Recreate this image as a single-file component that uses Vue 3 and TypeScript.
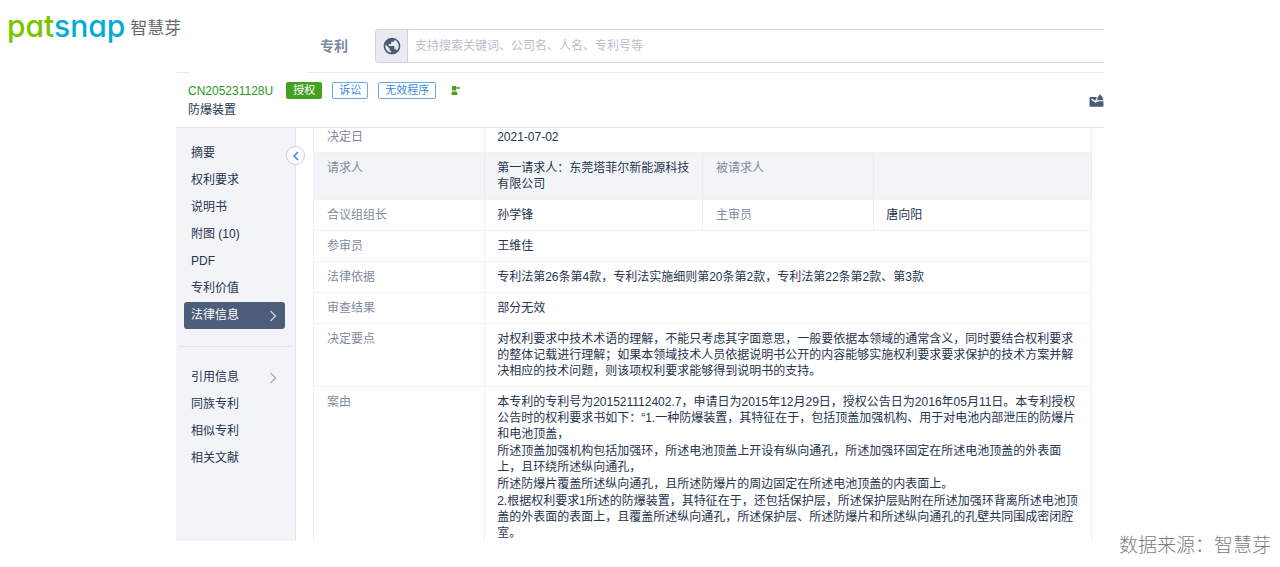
<script setup lang="ts">
import { ref } from 'vue'

interface NavItem {
  label: string
  expandable?: boolean
}

interface Cell {
  label: string
  paragraphs: string[]
}

const query = ref('')
const active = ref('法律信息')

const navGroups: NavItem[][] = [
  [
    { label: '摘要' },
    { label: '权利要求' },
    { label: '说明书' },
    { label: '附图 (10)' },
    { label: 'PDF' },
    { label: '专利价值' },
    { label: '法律信息', expandable: true },
  ],
  [
    { label: '引用信息', expandable: true },
    { label: '同族专利' },
    { label: '相似专利' },
    { label: '相关文献' },
  ],
]

const rows: Cell[][] = [
  [{ label: '决定日', paragraphs: ['2021-07-02'] }],
  [
    { label: '请求人', paragraphs: ['第一请求人：东莞塔菲尔新能源科技有限公司'] },
    { label: '被请求人', paragraphs: [] },
  ],
  [
    { label: '合议组组长', paragraphs: ['孙学锋'] },
    { label: '主审员', paragraphs: ['唐向阳'] },
  ],
  [{ label: '参审员', paragraphs: ['王维佳'] }],
  [
    {
      label: '法律依据',
      paragraphs: ['专利法第26条第4款，专利法实施细则第20条第2款，专利法第22条第2款、第3款'],
    },
  ],
  [{ label: '审查结果', paragraphs: ['部分无效'] }],
  [
    {
      label: '决定要点',
      paragraphs: [
        '对权利要求中技术术语的理解，不能只考虑其字面意思，一般要依据本领域的通常含义，同时要结合权利要求的整体记载进行理解；如果本领域技术人员依据说明书公开的内容能够实施权利要求要求保护的技术方案并解决相应的技术问题，则该项权利要求能够得到说明书的支持。',
      ],
    },
  ],
  [
    {
      label: '案由',
      paragraphs: [
        '本专利的专利号为201521112402.7，申请日为2015年12月29日，授权公告日为2016年05月11日。本专利授权公告时的权利要求书如下：“1.一种防爆装置，其特征在于，包括顶盖加强机构、用于对电池内部泄压的防爆片和电池顶盖，',
        '所述顶盖加强机构包括加强环，所述电池顶盖上开设有纵向通孔，所述加强环固定在所述电池顶盖的外表面上，且环绕所述纵向通孔，',
        '所述防爆片覆盖所述纵向通孔，且所述防爆片的周边固定在所述电池顶盖的内表面上。',
        '2.根据权利要求1所述的防爆装置，其特征在于，还包括保护层，所述保护层贴附在所述加强环背离所述电池顶盖的外表面的表面上，且覆盖所述纵向通孔，所述保护层、所述防爆片和所述纵向通孔的孔壁共同围成密闭腔室。',
      ],
    },
  ],
]
</script>

<template>
  <div class="page">
    <div class="brand">
      <span class="wordmark"><span class="pat">pat</span><span class="snap">snap</span></span>
      <span class="brand-cn">智慧芽</span>
    </div>

    <main class="panel">
      <form class="search" @submit.prevent>
        <label class="search-label" for="query">专利</label>
        <div class="search-box">
          <button class="scope" type="button" aria-label="全球">
            <svg viewBox="0 0 24 24" width="20" height="20">
              <path
                fill="currentColor"
                d="M12 2C6.48 2 2 6.48 2 12s4.48 10 10 10 10-4.48 10-10S17.52 2 12 2zm-1 17.93c-3.95-.49-7-3.85-7-7.93 0-.62.08-1.21.21-1.79L9 15v1c0 1.1.9 2 2 2v1.93zm6.9-2.54c-.26-.81-1-1.39-1.9-1.39h-1v-3c0-.55-.45-1-1-1H8v-2h2c.55 0 1-.45 1-1V7h2c1.1 0 2-.9 2-2v-.41c2.93 1.19 5 4.06 5 7.41 0 2.08-.8 3.97-2.1 5.39z"
              />
            </svg>
          </button>
          <input
            id="query"
            v-model="query"
            type="text"
            placeholder="支持搜索关键词、公司名、人名、专利号等"
          />
        </div>
      </form>

      <div class="rule"><span></span><span></span></div>

      <header class="heading">
        <div class="heading-main">
          <div class="ident">
            <a class="number" href="#">CN205231128U</a>
            <span class="tag solid">授权</span>
            <span class="tag">诉讼</span>
            <span class="tag">无效程序</span>
            <svg class="gavel" viewBox="0 0 10 10" width="10" height="10">
              <path fill="currentColor" d="M1 0h4v1.300h4v1.500H5v1.700H1zM1.500 5.500h4l.8 1.500v2H.5V7z" />
            </svg>
          </div>
          <h1>防爆装置</h1>
        </div>
        <button class="mail" type="button" aria-label="订阅提醒">
          <svg viewBox="0 0 15 13" width="15" height="13">
            <rect x="0.500" y="3" width="14" height="9.700" rx="1" fill="currentColor" />
            <path d="M2.500 5 6.500 8 9 6.800" fill="none" stroke="#fff" stroke-width="1.500" />
            <path
              d="M7.500 6.300 8.500 5V3.500L10.300 1.200 11.100 0 11.900 1.200 13.700 3.500V5l1 1.300z"
              fill="currentColor"
              stroke="#fff"
              stroke-width="2"
              paint-order="stroke"
            />
          </svg>
        </button>
      </header>

      <div class="body">
        <aside class="sidebar">
          <nav>
            <ul v-for="(group, g) in navGroups" :key="g">
              <li v-for="item in group" :key="item.label">
                <a
                  href="#"
                  :class="{ active: item.label === active }"
                  @click.prevent="active = item.label"
                >
                  {{ item.label }}
                  <svg v-if="item.expandable" viewBox="0 0 8 12" width="8" height="12">
                    <path
                      d="M1.500 1 6.500 6l-5 5"
                      fill="none"
                      stroke="currentColor"
                      stroke-width="1.300"
                    />
                  </svg>
                </a>
              </li>
            </ul>
          </nav>
          <button class="collapse" type="button" aria-label="收起">
            <svg viewBox="0 0 6 10" width="6" height="10">
              <path d="M5 1 1 5l4 4" fill="none" stroke="currentColor" stroke-width="1.500" />
            </svg>
          </button>
        </aside>

        <div class="content">
          <table>
            <colgroup>
              <col class="col-label" />
              <col class="col-value" />
              <col class="col-label" />
              <col class="col-value" />
            </colgroup>
            <tbody>
              <tr v-for="(row, r) in rows" :key="r" :class="{ shaded: r === 1 }">
                <template v-for="cell in row" :key="cell.label">
                  <th scope="row">{{ cell.label }}</th>
                  <td :colspan="row.length === 1 ? 3 : 1">
                    <p v-for="(text, p) in cell.paragraphs" :key="p">{{ text }}</p>
                  </td>
                </template>
              </tr>
            </tbody>
          </table>
        </div>
      </div>
    </main>

    <p class="source">数据来源：智慧芽</p>
  </div>
</template>

<style>
body {
  margin: 0;
  background: #fff;
}
</style>

<style scoped>
* {
  box-sizing: border-box;
}

.page {
  display: grid;
  grid-template-columns: 176px minmax(0, 1fr) 176px;
  min-height: 100vh;
  font-family: 'Liberation Sans', 'Noto Sans CJK SC', sans-serif;
  font-size: 12px;
  line-height: 16px;
  color: #26344f;
}

p,
h1,
ul {
  margin: 0;
  padding: 0;
}

ul {
  list-style: none;
}

a {
  color: inherit;
  text-decoration: none;
}

svg {
  display: block;
  flex: none;
}

button {
  display: flex;
  align-items: center;
  justify-content: center;
  padding: 0;
  border: 0;
  background: none;
  color: #4b5a78;
}

.brand {
  display: flex;
  align-items: flex-start;
  gap: 5px;
  align-self: start;
  padding: 8px 0 0 7px;
  white-space: nowrap;
}

.wordmark {
  font-family: Inter, 'Open Sans', sans-serif;
  font-feature-settings: 'cv11';
  font-size: 30px;
  font-weight: 500;
  line-height: 36px;
}

.pat {
  color: #7ac400;
}

.snap {
  color: #00add3;
}

.brand-cn {
  font-size: 17px;
  line-height: 42px;
  color: #6b6b6b;
}

.panel {
  align-self: start;
  padding-top: 29px;
}

.search {
  display: flex;
  align-items: center;
  padding-left: 144px;
}

.search-label {
  width: 55px;
  font-size: 14px;
  font-weight: 700;
  color: #7b889f;
}

.search-box {
  display: flex;
  flex: 1;
  height: 34px;
  border: 1px solid #cfd2da;
  border-right: 0;
  border-radius: 4px 0 0 4px;
  overflow: hidden;
}

.scope {
  width: 32px;
  border-right: 1px solid #cfd2da;
  background: #eaebf0;
}

.search-box input {
  flex: 1;
  min-width: 0;
  padding: 0 7px;
  border: 0;
  outline: 0;
  font: inherit;
  color: inherit;
}

.search-box input::placeholder {
  color: #b9bec9;
  opacity: 1;
}

.rule {
  display: flex;
  gap: 117px;
  margin-top: 9px;
}

.rule span {
  width: 14px;
  height: 1px;
  background: #e9eaee;
}

.rule span:last-child {
  flex: 1;
}

.heading {
  display: flex;
  align-items: center;
  justify-content: space-between;
  height: 55px;
  padding: 0 0 0 12px;
  border-bottom: 1px solid #e2e4e8;
}

.ident {
  display: flex;
  align-items: center;
  gap: 10px;
}

.number {
  margin-right: 3px;
  color: #2a9a26;
}

.tag {
  padding: 0 6px;
  border: 1px solid #6aa9e6;
  border-radius: 2px;
  font-size: 11px;
  line-height: 15px;
  color: #3d8bd9;
}

.tag.solid {
  border-color: #43a022;
  background: #43a022;
  color: #fff;
}

.gavel {
  margin-left: 5px;
  color: #43a022;
}

.heading h1 {
  margin-top: 3px;
  font-size: 12px;
  font-weight: 400;
  line-height: 16px;
}

.body {
  display: flex;
}

.sidebar {
  position: relative;
  width: 120px;
  flex: none;
  padding-top: 12px;
  border-right: 1px solid #e3e5ea;
  background: #f3f4f7;
}

.sidebar ul + ul {
  margin: 17px 3px 0 2px;
  padding-top: 17px;
  border-top: 1px solid #e2e4e9;
}

.sidebar a {
  display: flex;
  align-items: center;
  justify-content: space-between;
  margin: 0 10px 0 8px;
  padding: 0 8px 0 7px;
  border-radius: 3px;
  line-height: 27px;
}

.sidebar ul + ul a {
  margin: 0 7px 0 6px;
}

.sidebar a svg {
  color: #a5acba;
}

.sidebar a.active {
  background: #4e5d79;
  color: #fff;
}

.sidebar a.active svg {
  color: #cdd2dc;
}

.collapse {
  position: absolute;
  top: 18px;
  right: -10px;
  width: 19px;
  height: 19px;
  border: 1px solid #cdd1da;
  border-radius: 50%;
  background: #fff;
  color: #2f86dc;
}

.content {
  flex: 1;
  min-width: 0;
  padding: 0 12px 0 17px;
}

table {
  width: 100%;
  table-layout: fixed;
  border-spacing: 0;
  border-left: 1px solid #f0f1f4;
}

.col-label {
  width: 22%;
}

.col-value {
  width: 28%;
}

th,
td {
  padding: 7px 8px 7px 13px;
  border-right: 1px solid #f0f1f4;
  border-bottom: 1px solid #f0f1f4;
  text-align: left;
  vertical-align: top;
  font-weight: 400;
}

td {
  padding-left: 12px;
}

th {
  color: #7f8a9f;
}

p + p {
  margin-top: 1px;
}

tr:first-child > * {
  padding-top: 1px;
}

tr:last-child > * {
  padding-bottom: 0;
  border-bottom: 0;
}

.shaded > * {
  border-right-color: #e9ebef;
  background: #f3f4f7;
}

.source {
  align-self: end;
  padding: 0 9px 9px 15px;
  font-size: 19px;
  font-weight: 300;
  line-height: 24px;
  color: #7c7c7c;
  white-space: nowrap;
}
</style>
